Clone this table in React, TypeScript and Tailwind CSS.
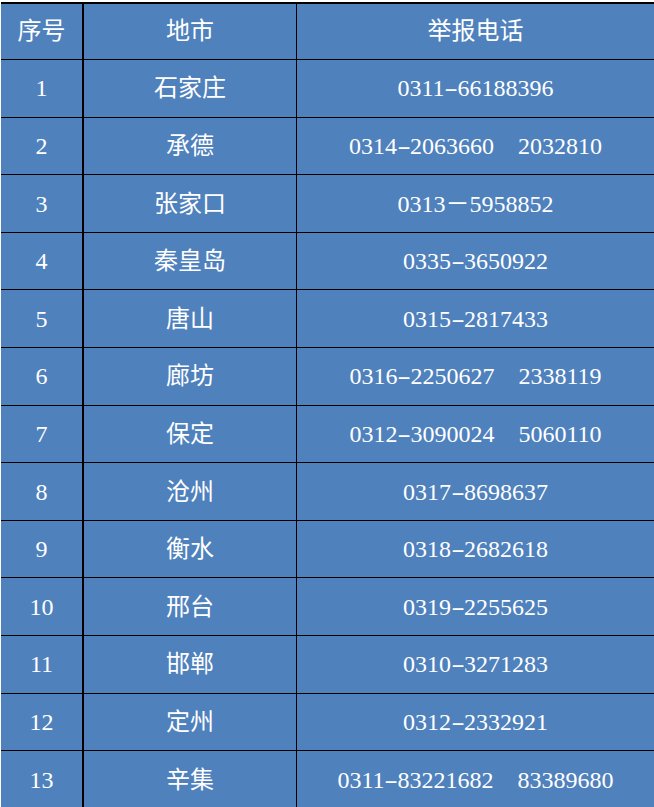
import React from "react";

const rows: [string, string, string][] = [
  ["1", "石家庄", "0311-66188396"],
  ["2", "承德", "0314-2063660\u30002032810"],
  ["3", "张家口", "0313－5958852"],
  ["4", "秦皇岛", "0335-3650922"],
  ["5", "唐山", "0315-2817433"],
  ["6", "廊坊", "0316-2250627\u30002338119"],
  ["7", "保定", "0312-3090024\u30005060110"],
  ["8", "沧州", "0317-8698637"],
  ["9", "衡水", "0318-2682618"],
  ["10", "邢台", "0319-2255625"],
  ["11", "邯郸", "0310-3271283"],
  ["12", "定州", "0312-2332921"],
  ["13", "辛集", "0311-83221682\u300083389680"],
];

// hyphen gets a digit-wide box, like the song-style font in the sheet
const Phone = ({ text }: { text: string }) => {
  const parts = text.split("-");
  return (
    <span className="whitespace-pre">
      {parts.map((p, i) => (
        <React.Fragment key={i}>
          {i > 0 && (
            <span className="inline-block w-[13px] text-center">
              <span className="inline-block scale-x-[1.7]">-</span>
            </span>
          )}
          {p}
        </React.Fragment>
      ))}
    </span>
  );
};

const Row = ({ cells, first }: { cells: string[]; first?: boolean }) => (
  <div
    className={`flex h-[57.6px] ${first ? "border-t-2" : "border-t-[1.6px]"} border-black`}
  >
    <div className="flex w-[81px] shrink-0 items-center justify-center">
      {cells[0]}
    </div>
    <div className="flex w-[214px] shrink-0 items-center justify-center border-l-2 border-black">
      {cells[1]}
    </div>
    <div className="flex flex-1 items-center justify-center border-l-[1.6px] border-black">
      {first ? cells[2] : <Phone text={cells[2]} />}
    </div>
  </div>
);

export default function App() {
  return (
    <div className="h-[807px] w-[654px] overflow-hidden bg-white pl-px pt-[1.5px]">
      <div
        className="h-full bg-[#4f81bd] text-[24px] leading-none text-white"
        style={{ fontFamily: '"Liberation Serif", "Noto Sans CJK SC", serif' }}
      >
        <Row cells={["序号", "地市", "举报电话"]} first />
        {rows.map((r) => (
          <Row key={r[0]} cells={r} />
        ))}
      </div>
    </div>
  );
}
